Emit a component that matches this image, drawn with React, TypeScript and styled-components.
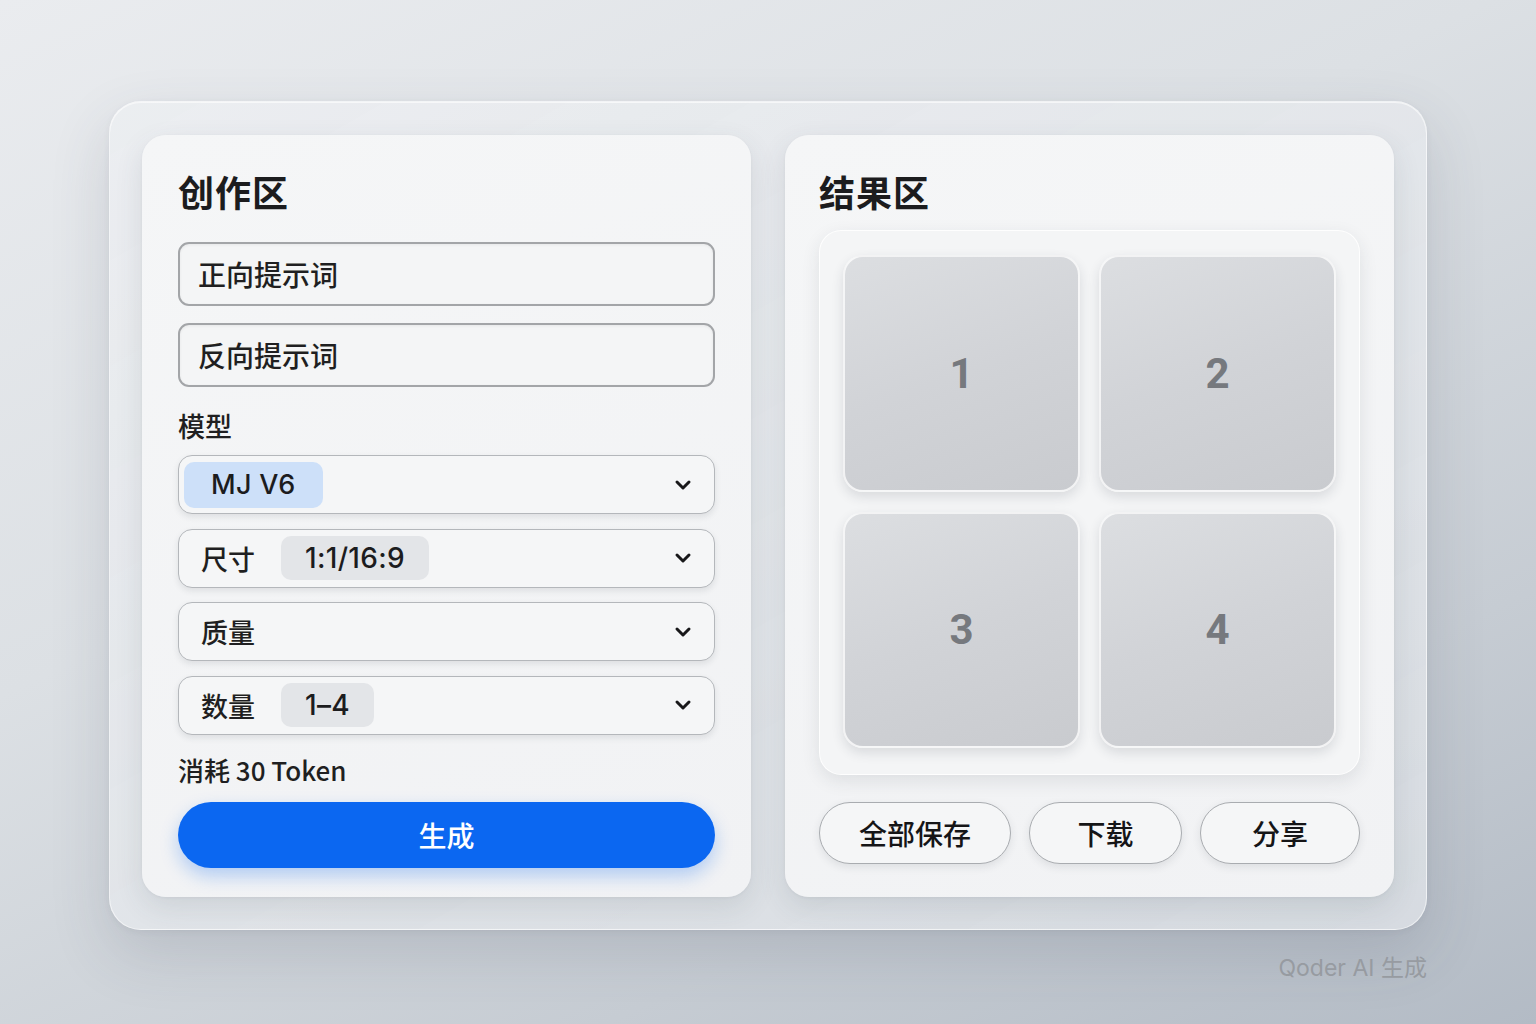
import React from "react";
import styled, { createGlobalStyle } from "styled-components";

const GlobalStyle = createGlobalStyle`
  html, body { margin: 0; padding: 0; }
  body {
    width: 1536px;
    height: 1024px;
    overflow: hidden;
    font-family: "Noto Sans CJK SC", "Noto Sans", "Inter", sans-serif;
    color: #1c1c1e;
  }
  * { box-sizing: border-box; }
`;

const Page = styled.div`
  width: 1536px;
  height: 1024px;
  background: linear-gradient(155deg, #eaecef 0%, #dce0e4 40%, #c6ccd3 75%, #b3bbc5 100%);
  display: flex;
  flex-direction: column;
  align-items: center;
  padding-top: 101px;
`;

const Shell = styled.div`
  width: 1318px;
  height: 829px;
  border-radius: 32px;
  padding: 33px 32px 32px;
  display: grid;
  grid-template-columns: 609px 609px;
  gap: 34px;
  background: linear-gradient(150deg, rgba(236, 238, 241, 0.88), rgba(220, 224, 229, 0.82));
  border: 1px solid rgba(255, 255, 255, 0.55);
  box-shadow: 0 24px 60px rgba(60, 70, 85, 0.16), 0 2px 6px rgba(60, 70, 85, 0.06),
    inset 0 1px 0 rgba(255, 255, 255, 0.6);
`;

const Panel = styled.section<{ $padX: number }>`
  height: 762px;
  border-radius: 24px;
  background: linear-gradient(160deg, #f5f6f7, #f1f2f4);
  box-shadow: 0 10px 28px rgba(60, 70, 85, 0.12), 0 1px 3px rgba(60, 70, 85, 0.06);
  padding: 32px ${(p) => p.$padX}px 0;
  display: flex;
  flex-direction: column;
`;

const Title = styled.h2`
  margin: 0;
  font-size: 36px;
  line-height: 48px;
  font-weight: 700;
  color: #1c1c1e;
  letter-spacing: 1px;
`;

const Field = styled.div<{ $mt: number }>`
  margin-top: ${(p) => p.$mt}px;
  height: 64px;
  border: 2px solid #a3a5a8;
  border-radius: 11px;
  background: #f4f5f6;
  box-shadow: inset 0 1px 3px rgba(0, 0, 0, 0.06);
  display: flex;
  align-items: center;
  padding-left: 18px;
  font-size: 28px;
  font-weight: 500;
  color: #1f1f21;
`;

const Label = styled.div<{ $mt: number }>`
  margin-top: ${(p) => p.$mt}px;
  font-size: 27px;
  line-height: 36px;
  font-weight: 500;
  color: #1f1f21;
`;

const SelectList = styled.div`
  margin-top: 11px;
  display: flex;
  flex-direction: column;
  gap: 14.5px;
`;

const Select = styled.div<{ $chipOnly?: boolean }>`
  height: 59px;
  border: 1.5px solid #b4b7bb;
  border-radius: 14px;
  background: #f5f6f7;
  box-shadow: 0 3px 6px rgba(40, 50, 60, 0.1);
  display: flex;
  align-items: center;
  padding-left: ${(p) => (p.$chipOnly ? 5 : 22)}px;
  padding-right: 22px;
  gap: 26px;
  font-size: 27px;
  font-weight: 500;
  color: #1f1f21;
`;

const Chip = styled.span<{ $tone: "blue" | "gray" }>`
  display: inline-flex;
  align-items: center;
  height: ${(p) => (p.$tone === "blue" ? 46 : 44)}px;
  padding: 0 ${(p) => (p.$tone === "blue" ? 27 : 24)}px;
  border-radius: 10px;
  background: ${(p) => (p.$tone === "blue" ? "#cde0f9" : "#e3e5e8")};
  font-family: "Inter", "Noto Sans", sans-serif;
  font-size: ${(p) => (p.$tone === "blue" ? 27 : 28)}px;
  font-weight: 500;
  letter-spacing: 0.3px;
  color: #1c1c1e;
`;

const Chevron = styled.svg`
  margin-left: auto;
  width: 18px;
  height: 12px;
`;

const Cost = styled.div`
  margin-top: 17px;
  font-size: 26px;
  line-height: 36px;
  font-weight: 500;
  color: #1f1f21;
`;

const PrimaryButton = styled.button`
  margin-top: 14px;
  height: 66px;
  width: 100%;
  border: none;
  border-radius: 33px;
  background: #0b67f1;
  box-shadow: 0 8px 18px rgba(11, 103, 241, 0.28);
  color: #fff;
  font-family: "Noto Sans CJK SC", sans-serif;
  font-size: 28px;
  font-weight: 500;
`;

const Gallery = styled.div`
  margin-top: 15px;
  height: 545px;
  border-radius: 22px;
  background: #f4f5f6;
  border: 1px solid rgba(255, 255, 255, 0.9);
  box-shadow: 0 6px 18px rgba(40, 50, 60, 0.1);
  padding: 24px 23px 26px 23px;
  display: grid;
  grid-template-columns: 1fr 1fr;
  grid-template-rows: 1fr 1fr;
  column-gap: 19px;
  row-gap: 20px;
`;

const Tile = styled.div`
  border-radius: 20px;
  background: linear-gradient(160deg, #dcdee1 0%, #d1d3d7 50%, #c9cbcf 100%);
  border: 2px solid rgba(255, 255, 255, 0.75);
  box-shadow: 0 5px 12px rgba(40, 50, 60, 0.13);
  display: flex;
  align-items: center;
  justify-content: center;
  font-family: "Roboto", "Inter", sans-serif;
  font-size: 42px;
  font-weight: 700;
  color: #76797e;
`;

const Actions = styled.div`
  margin-top: 27px;
  display: grid;
  grid-template-columns: 191fr 152fr 159fr;
  gap: 18px;
`;

const GhostButton = styled.button`
  height: 62px;
  border-radius: 31px;
  border: 1.5px solid #a9acb0;
  background: #f5f6f7;
  box-shadow: 0 3px 8px rgba(40, 50, 60, 0.1);
  font-family: "Noto Sans CJK SC", sans-serif;
  font-size: 28px;
  font-weight: 500;
  color: #151517;
`;

const Watermark = styled.div`
  width: 1318px;
  margin-top: 19px;
  text-align: right;
  font-family: "Inter", "Noto Sans CJK SC", sans-serif;
  font-size: 23px;
  color: #979ba1;
`;

const Down = () => (
  <Chevron viewBox="0 0 18 12">
    <path d="M3 3 L9 9 L15 3" fill="none" stroke="#18181a" strokeWidth="3" strokeLinecap="round" strokeLinejoin="round" />
  </Chevron>
);

export default function App() {
  return (
    <>
      <GlobalStyle />
      <Page>
        <Shell>
          <Panel $padX={36}>
            <Title>创作区</Title>
            <Field $mt={27}>正向提示词</Field>
            <Field $mt={17}>反向提示词</Field>
            <Label $mt={21}>模型</Label>
            <SelectList>
              <Select $chipOnly>
                <Chip $tone="blue">MJ V6</Chip>
                <Down />
              </Select>
              <Select>
                <span>尺寸</span>
                <Chip $tone="gray">1:1/16:9</Chip>
                <Down />
              </Select>
              <Select>
                <span>质量</span>
                <Down />
              </Select>
              <Select>
                <span>数量</span>
                <Chip $tone="gray">1–4</Chip>
                <Down />
              </Select>
            </SelectList>
            <Cost>消耗 30 Token</Cost>
            <PrimaryButton>生成</PrimaryButton>
          </Panel>
          <Panel $padX={34}>
            <Title>结果区</Title>
            <Gallery>
              {[1, 2, 3, 4].map((n) => (
                <Tile key={n}>{n}</Tile>
              ))}
            </Gallery>
            <Actions>
              <GhostButton>全部保存</GhostButton>
              <GhostButton>下载</GhostButton>
              <GhostButton>分享</GhostButton>
            </Actions>
          </Panel>
        </Shell>
        <Watermark>Qoder AI 生成</Watermark>
      </Page>
    </>
  );
}
